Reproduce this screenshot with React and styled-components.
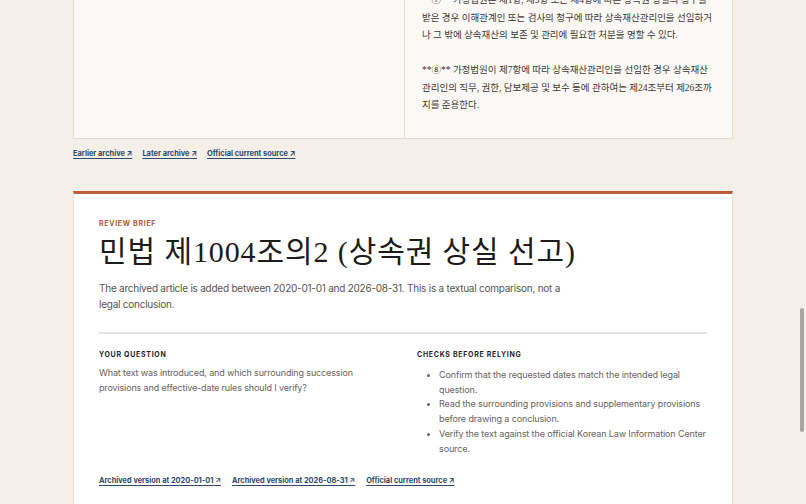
import React from "react";
import styled, { createGlobalStyle } from "styled-components";

const GlobalStyle = createGlobalStyle`
  html, body {
    margin: 0;
    padding: 0;
    background: #f4f0e9;
    overflow: hidden;
  }
  body {
    font-family: Inter, "Noto Sans", "Noto Sans CJK KR", sans-serif;
  }
`;

const Page = styled.main`
  width: 660px;
  margin: -8px auto 0;
`;

const ArticleCard = styled.section`
  display: grid;
  grid-template-columns: 330px 330px;
  background: #fbf9f5;
  border: 1px solid #e2dbcf;
  border-top: none;
  box-sizing: border-box;
`;

const Column = styled.div`
  padding: ${(p) => (p.$text ? "0 10px 23px 17px" : "0")};
  border-left: ${(p) => (p.$text ? "1px solid #e2dbcf" : "none")};
  min-width: 0;
`;

const LawText = styled.p`
  margin: 0 0 17.5px;
  font-family: "Liberation Serif", "Noto Sans CJK KR", serif;
  font-size: 9.5px;
  line-height: 17.5px;
  color: #3b3733;
  &:last-child {
    margin-bottom: 0;
  }
`;

const Line = styled.span`
  display: block;
  white-space: nowrap;
`;

const LinkRow = styled.nav`
  display: flex;
  gap: ${(p) => p.$gap}px;
  margin-top: ${(p) => p.$top}px;
  line-height: 12px;
`;

const SourceLink = styled.a`
  font-family: Inter, "Noto Sans", sans-serif;
  font-size: ${(p) => p.$size || 7.4}px;
  font-weight: 700;
  color: #2d4a6a;
  text-decoration: underline;
  text-underline-offset: 1.5px;
  white-space: nowrap;
`;

const BriefCard = styled.section`
  margin-top: 31.5px;
  background: #ffffff;
  border: 1px solid #e8e1d6;
  border-top: 3px solid #b95d3e;
  padding: 25px 25px 40px;
`;

const Eyebrow = styled.div`
  font-size: 7px;
  font-weight: 700;
  line-height: 10px;
  letter-spacing: 0.1em;
  color: ${(p) => p.$color || "#1f1f1f"};
  text-transform: uppercase;
`;

const Title = styled.h1`
  margin: 4px 0 0;
  font-family: "Liberation Serif", "Noto Sans CJK KR", serif;
  font-weight: 400;
  font-size: 30px;
  line-height: 38px;
  color: #1d1c1a;
  letter-spacing: 0.03em;
  white-space: nowrap;
`;

const Lead = styled.p`
  margin: 9px 0 0;
  max-width: 470px;
  font-size: 10px;
  letter-spacing: -0.24px;
  line-height: 16px;
  color: #57544f;
`;

const Divider = styled.hr`
  margin: 20px 0 0;
  border: none;
  height: 2px;
  background: #e7e4df;
`;

const TwoCol = styled.div`
  display: grid;
  grid-template-columns: 290px 290px;
  column-gap: 28px;
  margin-top: 16px;
`;

const Body = styled.p`
  margin: 5px 0 0;
  font-size: 9px;
  letter-spacing: -0.14px;
  line-height: 15px;
  color: #67635e;
`;

const Checks = styled.ul`
  margin: 8px 0 0;
  padding-left: 22px;
  font-size: 9px;
  letter-spacing: -0.12px;
  line-height: 14.7px;
  color: #67635e;
  li::marker {
    font-size: 8px;
  }
`;

const ScrollThumb = styled.div`
  position: fixed;
  right: 2px;
  top: 308px;
  width: 4px;
  height: 124px;
  border-radius: 2px;
  background: #aaa69f;
`;

const arrow = " ↗";

const paragraphs = [
  [
    "**⑦** 가정법원은 제1항, 제3항 또는 제4항에 따른 상속권 상실의 청구를",
    "받은 경우 이해관계인 또는 검사의 청구에 따라 상속재산관리인을 선임하거",
    "나 그 밖에 상속재산의 보존 및 관리에 필요한 처분을 명할 수 있다.",
  ],
  [
    "**⑧** 가정법원이 제7항에 따라 상속재산관리인을 선임한 경우 상속재산",
    "관리인의 직무, 권한, 담보제공 및 보수 등에 관하여는 제24조부터 제26조까",
    "지를 준용한다.",
  ],
];

export default function App() {
  return (
    <>
      <GlobalStyle />
      <Page>
        <ArticleCard>
          <Column />
          <Column $text>
            {paragraphs.map((lines, i) => (
              <LawText key={i}>
                {lines.map((l) => (
                  <Line key={l}>{l}</Line>
                ))}
              </LawText>
            ))}
          </Column>
        </ArticleCard>

        <LinkRow $gap={10} $top={9}>
          <SourceLink href="#">Earlier archive{arrow}</SourceLink>
          <SourceLink href="#">Later archive{arrow}</SourceLink>
          <SourceLink href="#">Official current source{arrow}</SourceLink>
        </LinkRow>

        <BriefCard>
          <Eyebrow $color="#b35a3b">Review brief</Eyebrow>
          <Title>민법 제1004조의2 (상속권 상실 선고)</Title>
          <Lead>
            The archived article is added between 2020-01-01 and 2026-08-31. This is a
            textual comparison, not a legal conclusion.
          </Lead>
          <Divider />
          <TwoCol>
            <div>
              <Eyebrow>Your question</Eyebrow>
              <Body>
                What text was introduced, and which surrounding succession provisions
                and effective-date rules should I verify?
              </Body>
            </div>
            <div>
              <Eyebrow>Checks before relying</Eyebrow>
              <Checks>
                <li>Confirm that the requested dates match the intended legal question.</li>
                <li>
                  Read the surrounding provisions and supplementary provisions before
                  drawing a conclusion.
                </li>
                <li>
                  Verify the text against the official Korean Law Information Center
                  source.
                </li>
              </Checks>
            </div>
          </TwoCol>
          <LinkRow $gap={11} $top={19}>
            <SourceLink href="#">Archived version at 2020-01-01{arrow}</SourceLink>
            <SourceLink href="#">Archived version at 2026-08-31{arrow}</SourceLink>
            <SourceLink href="#">Official current source{arrow}</SourceLink>
          </LinkRow>
        </BriefCard>
      </Page>
      <ScrollThumb />
    </>
  );
}
